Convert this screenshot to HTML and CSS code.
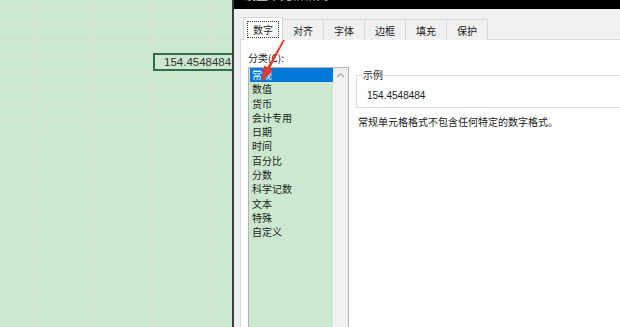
FILE: index.html
```html
<!DOCTYPE html>
<html lang="zh-CN">
<head>
  <meta charset="UTF-8">
  <title>设置单元格格式</title>
  <link rel="stylesheet" href="styles.css">
</head>
<body>
  <div class="screen">
    <div class="sheet">
      <div class="cell-sel">154.4548484</div>
    </div>

    <div class="dialog">
      <div class="titlebar"><span class="title">设置单元格格式</span></div>

      <div class="tabs">
        <div class="tab active"><span class="focus">数字</span></div>
        <div class="tab">对齐</div>
        <div class="tab">字体</div>
        <div class="tab">边框</div>
        <div class="tab">填充</div>
        <div class="tab">保护</div>
      </div>

      <div class="panel">
        <div class="label">分类(<u>C</u>):</div>
        <div class="row">
          <div class="listbox">
            <ul class="items">
              <li class="selected">常规</li>
              <li>数值</li>
              <li>货币</li>
              <li>会计专用</li>
              <li>日期</li>
              <li>时间</li>
              <li>百分比</li>
              <li>分数</li>
              <li>科学记数</li>
              <li>文本</li>
              <li>特殊</li>
              <li>自定义</li>
            </ul>
            <div class="scrollbar">
              <svg width="9" height="6" viewBox="0 0 9 6"><path d="M1 5 L4.5 1.5 L8 5" fill="none" stroke="#a6a6a6" stroke-width="1.2"/></svg>
            </div>
          </div>

          <div class="side">
            <fieldset class="sample">
              <legend>示例</legend>
              <div class="value">154.4548484</div>
            </fieldset>
            <p class="desc">常规单元格格式不包含任何特定的数字格式。</p>
          </div>
        </div>
      </div>
    </div>

    <svg class="arrow" width="620" height="327" viewBox="0 0 620 327">
      <polygon points="291.4,27.2 269.9,68.6 273.0,70.3 261,82 264.2,65.5 267.3,67.2 290.6,26.8" fill="#e8352e"/>
    </svg>
  </div>
</body>
</html>
```

FILE: styles.css
```css
body {
  margin: 0;
  font-family: "Noto Sans CJK SC", "Liberation Sans", sans-serif;
  font-size: 10px;
  color: #1a1a1a;
}
.screen {
  position: relative;
  display: flex;
  width: 620px;
  height: 327px;
  overflow: hidden;
}

/* spreadsheet behind the dialog */
.sheet {
  width: 232px;
  flex-shrink: 0;
  overflow: hidden;
  padding-top: 53px;
  box-sizing: border-box;
  background-color: #cce8cf;
  background-image:
    linear-gradient(to right, #d6dbd6 1px, transparent 1px),
    linear-gradient(to bottom, #d6dbd6 1px, transparent 1px);
  background-size: 60px 100%, 100% 15.8px;
  background-position: 33px 0, 0 7px;
}
.cell-sel {
  margin-left: 153px;
  width: 96px;
  height: 18px;
  box-sizing: border-box;
  border: 2px solid #2e7148;
  padding-left: 9px;
  font-family: "Liberation Sans", Arial, sans-serif;
  font-size: 11.5px;
  line-height: 15px;
  color: #333;
  white-space: nowrap;
}

/* format cells dialog */
.dialog {
  flex: 1;
  border-left: 2px solid #3c3c3c;
  background: #f0f0f0;
  padding-left: 6px;
}
.titlebar {
  height: 9px;
  margin-left: -6px;
  background: #000;
  overflow: hidden;
  color: #fff;
  padding-left: 10px;
}
.title {
  display: block;
  margin-top: -11px;
  font-size: 12px;
  line-height: 12px;
  opacity: 0.8;
}
.tabs {
  display: flex;
  align-items: flex-end;
  height: 23px;
  margin-top: 8px;
  padding-left: 3px;
  margin-bottom: -1px;
  position: relative;
  z-index: 1;
}
.tab {
  height: 21px;
  box-sizing: border-box;
  padding: 0 10px;
  margin-left: -1px;
  border: 1px solid #d9d9d9;
  border-bottom: 0;
  background: #f0f0f0;
  display: flex;
  align-items: center;
  justify-content: center;
  white-space: nowrap;
}
.tab.active {
  height: 23px;
  width: 40px;
  padding: 0;
  margin-left: 0;
  background: #fff;
  border-color: #d9d9d9;
}
.focus {
  border: 1px dotted #333;
  padding: 1px 5px;
  line-height: 13px;
}

.panel {
  background: #fff;
  border: 1px solid #d9d9d9;
  border-right: 0;
  height: 300px;
  padding: 11px 0 0 7px;
}
.label {
  line-height: 14px;
}
.label u {
  text-decoration: none;
}
.row {
  display: flex;
  gap: 7px;
  margin-top: 2px;
}
.listbox {
  display: flex;
  width: 99px;
  height: 280px;
  border: 1px solid #b4b4b8;
  background: #cce8cf;
}
.items {
  flex: 1;
  list-style: none;
  margin: 0;
  padding: 0 0 0 1px;
}
.items li {
  line-height: 14.3px;
  padding-left: 2px;
}
.items li.selected {
  background: #0078d7;
  color: #fff;
}
.scrollbar {
  width: 15px;
  background: #f0f0f0;
  display: flex;
  justify-content: center;
  padding-top: 4px;
  align-items: flex-start;
}

.side {
  flex: 1;
  margin-top: 1px;
}
.sample {
  margin: 0;
  padding: 7px 10px 4px;
  border: 1px solid #dcdcdc;
  border-right: 0;
  min-inline-size: 0;
}
.sample legend {
  margin-left: -5px;
  padding: 0 1px;
  line-height: 14px;
}
.value {
  font-family: "Liberation Sans", Arial, sans-serif;
  font-size: 10px;
  line-height: 14px;
}
.desc {
  margin: 7px 0 0;
  padding-left: 2px;
  line-height: 14px;
}

.arrow {
  position: absolute;
  left: 0;
  top: 0;
  pointer-events: none;
}
```
